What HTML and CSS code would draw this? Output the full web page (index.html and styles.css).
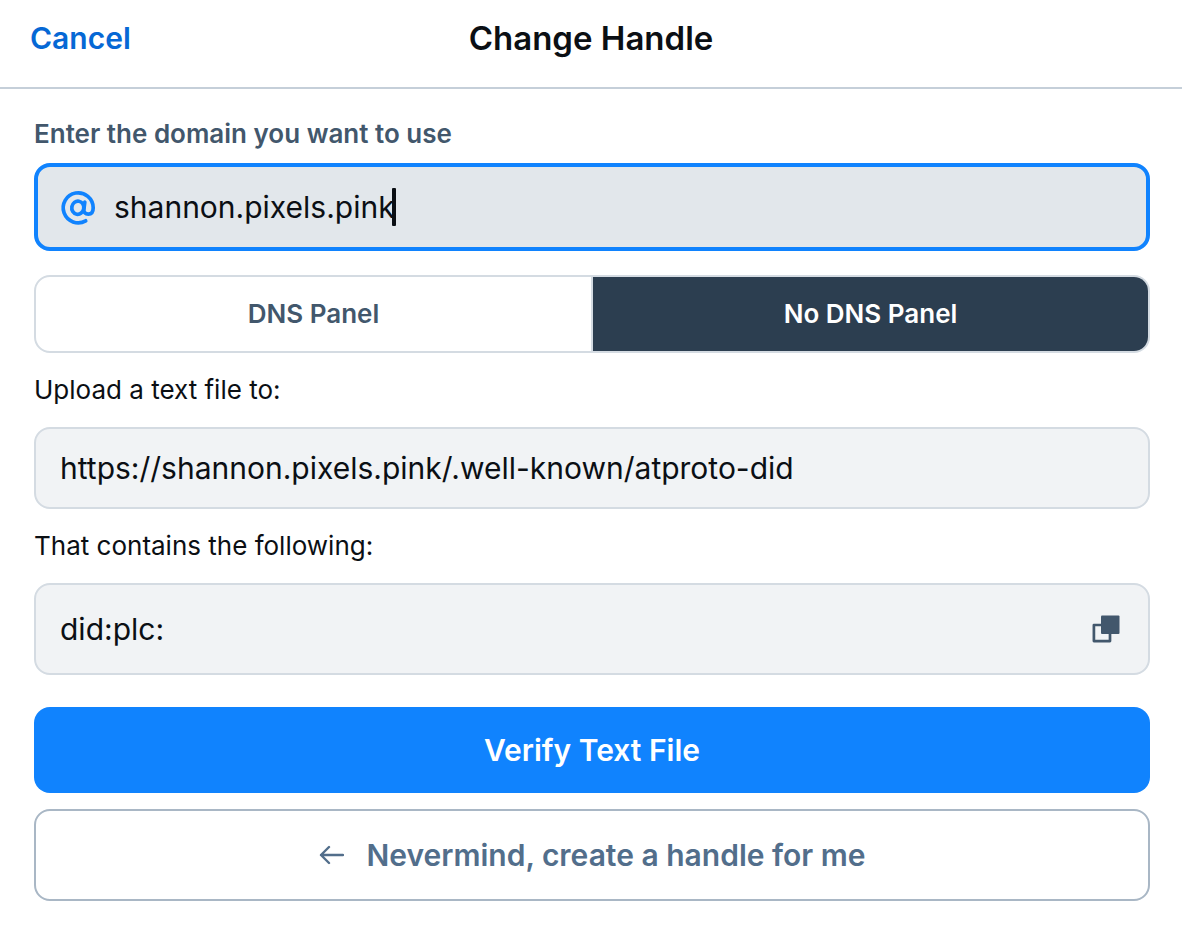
FILE: index.html
```
<!DOCTYPE html>
<html lang="en">
<head>
    <meta charset="utf-8">
    <title>Change Handle</title>
    <link rel="stylesheet" href="styles.css">
</head>
<body>
    <header class="header">
        <button type="button" class="cancel">Cancel</button>
        <h1>Change Handle</h1>
    </header>

    <form class="handle-form" id="handleForm">
        <label class="domain-label" for="domain">Enter the domain you want to use</label>
        <div class="domain-field">
            <svg class="at-icon" viewBox="0 0 40 40" aria-hidden="true">
                <path d="M27.700 33.800A15 15 0 1 1 35.200 20.800C35.200 24.900 33.400 27.200 30.300 27.200C27.200 27.200 25.500 25 25.900 22.200L26.800 15"/>
                <ellipse cx="19.800" cy="20.700" rx="6" ry="6.600" transform="rotate(10 19.800 20.700)"/>
            </svg>
            <div class="domain-entry">
                <input type="text" id="domain" name="domain" value="shannon.pixels.pink" autocomplete="off" spellcheck="false">
                <span class="caret"></span>
            </div>
        </div>

        <div class="tabs">
            <button type="button" class="tab">DNS Panel</button>
            <button type="button" class="tab active">No DNS Panel</button>
        </div>

        <p>Upload a text file to:</p>
        <div class="value-box">https://shannon.pixels.pink/.well-known/atproto-did</div>

        <p>That contains the following:</p>
        <div class="value-box did-box">
            <span>did:plc:</span>
            <button type="button" class="copy" aria-label="Copy">
                <svg viewBox="0 0 28 28" aria-hidden="true">
                    <path fill="currentColor" d="M10 .500h16.500a1 1 0 0 1 1 1V18a1 1 0 0 1-1 1H10a1 1 0 0 1-1-1V1.500a1 1 0 0 1 1-1Z"/>
                    <path fill="none" stroke="currentColor" stroke-width="2.700" stroke-linejoin="round" d="M10 10H1.900v16.100H18V18"/>
                </svg>
            </button>
        </div>

        <button type="submit" class="verify">Verify Text File</button>
        <button type="button" class="nevermind">
            <svg viewBox="0 0 26 26" aria-hidden="true">
                <path d="M25 13H3M11 5l-8 8 8 8"/>
            </svg>
            Nevermind, create a handle for me
        </button>
    </form>
</body>
</html>
```
FILE: styles.css
```
* {
    box-sizing: border-box;
}

body {
    margin: 0;
    background-color: #fff;
    color: #0b0f14;
    font-family: Inter, "Liberation Sans", sans-serif;
}

button {
    margin: 0;
    padding: 0;
    border: none;
    background: none;
    font-family: inherit;
    cursor: pointer;
}

.header {
    display: grid;
    grid-template-columns: 1fr auto 1fr;
    align-items: start;
    height: 89px;
    padding: 18px 30px 0;
    border-bottom: 2px solid #c5cfd9;
}

.cancel {
    justify-self: start;
    color: #0668d5;
    font-size: 30px;
    font-weight: 600;
    line-height: 40px;
}

h1 {
    margin: 0;
    font-size: 33px;
    font-weight: 600;
    line-height: 40px;
}

.handle-form {
    display: flex;
    flex-direction: column;
    padding: 28px 32px 32px 34px;
}

.domain-label {
    margin-bottom: 12px;
    color: #42576c;
    font-size: 26px;
    font-weight: 600;
    line-height: 34px;
}

.domain-field {
    display: flex;
    align-items: center;
    gap: 16px;
    height: 88px;
    padding: 0 20px;
    border: 4px solid #1083fe;
    border-radius: 16px;
    background-color: #e2e7eb;
}

.at-icon {
    width: 40px;
    height: 40px;
    fill: none;
    stroke: #1083fe;
    stroke-width: 3.7;
    stroke-linecap: round;
    stroke-linejoin: round;
}

.domain-entry {
    display: flex;
    align-items: center;
    flex: 1;
}

.domain-entry input {
    field-sizing: content;
    padding: 0;
    border: none;
    outline: none;
    background: none;
    color: inherit;
    font-family: inherit;
    font-size: 30px;
    line-height: 40px;
}

.caret {
    width: 4px;
    height: 38px;
    margin-left: -3px;
    border-radius: 1px;
    background-color: #0b0f14;
}

.tabs {
    display: flex;
    height: 78px;
    margin-top: 24px;
    overflow: hidden;
    border: 2px solid #d4dbe2;
    border-radius: 16px;
}

.tab {
    flex: 1;
    padding-bottom: 2px;
    border-right: 2px solid #d4dbe2;
    color: #42576c;
    font-size: 26px;
    font-weight: 600;
}

.tab.active {
    border-right: none;
    background-color: #2c3e50;
    color: #fff;
}

p {
    margin: 20px 0;
    font-size: 26px;
    line-height: 34px;
}

.value-box {
    display: flex;
    align-items: center;
    height: 82px;
    padding: 0 24px;
    border: 2px solid #d4dbe2;
    border-radius: 16px;
    background-color: #f1f3f5;
    font-size: 30px;
}

.did-box {
    justify-content: space-between;
    height: 92px;
    padding-right: 28px;
}

.copy {
    color: #42576c;
}

.copy svg {
    display: block;
    width: 28px;
    height: 28px;
}

.verify,
.nevermind {
    border-radius: 16px;
    font-size: 30px;
    font-weight: 600;
}

.verify {
    height: 86px;
    margin-top: 32px;
    background-color: #1083fe;
    color: #fff;
}

.nevermind {
    display: flex;
    align-items: center;
    justify-content: center;
    gap: 22px;
    height: 92px;
    margin-top: 16px;
    border: 2px solid #a9b7c5;
    color: #526e8b;
}

.nevermind svg {
    width: 26px;
    height: 26px;
    fill: none;
    stroke: currentColor;
    stroke-width: 2.4;
    stroke-linecap: round;
    stroke-linejoin: round;
}
```
